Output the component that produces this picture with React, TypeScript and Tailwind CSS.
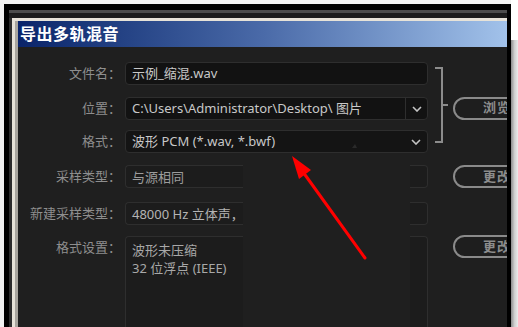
import React from "react";

const FONT = "font-['Noto_Sans','Noto_Sans_CJK_SC',sans-serif]";

function Chevron() {
  return (
    <svg width="10" height="6" viewBox="0 0 10 6" className="shrink-0">
      <path d="M1 1 L5 5 L9 1" fill="none" stroke="#c4c4c4" strokeWidth="1.6" />
    </svg>
  );
}

function Label({ text }: { text: string }) {
  return (
    <div className="w-[103px] shrink-0 text-right text-[13px] leading-[23px] text-[#8e8e8e] pr-0">
      {text}
    </div>
  );
}

function PillButton({ text }: { text: string }) {
  return (
    <div className="w-[88px] h-[23px] shrink-0 rounded-full border-2 border-[#8a8a8a] bg-[#1e1e1e] flex items-center justify-center text-[13px] text-[#8c8c8c] font-bold tracking-[1px]">
      {text}
    </div>
  );
}

function SplitBox({
  text,
  tall,
  color,
}: {
  text: React.ReactNode;
  tall?: boolean;
  color: string;
}) {
  return (
    <div className="flex ml-[4px]">
      <div
        className={
          tall
            ? "w-[118px] h-[110px] border-l border-t border-[#2e2e2e] rounded-tl-[4px] bg-[#1c1c1c] pl-[6px] pt-[4px]"
            : "w-[118px] h-[23px] border-l border-t border-b border-[#2e2e2e] rounded-l-[4px] bg-[#1c1c1c] pl-[6px] flex items-center"
        }
      >
        <div className={"text-[13px] leading-[18px] whitespace-nowrap " + color}>{text}</div>
      </div>
      <div className="w-[167px]" />
      <div
        className={
          tall
            ? "w-[18px] h-[110px] border-r border-t border-[#2e2e2e] rounded-tr-[4px] bg-[#1c1c1c]"
            : "w-[18px] h-[23px] border-r border-t border-b border-[#2e2e2e] rounded-r-[4px] bg-[#1c1c1c]"
        }
      />
    </div>
  );
}

export default function App() {
  return (
    <div className={"relative w-[518px] h-[327px] overflow-hidden bg-[#f2f2f2] flex " + FONT}>
      <div className="w-[4px] shrink-0" />
      {/* black window frame */}
      <div className="mt-[4px] w-[507px] shrink-0 bg-black flex flex-col">
        <div className="ml-[5px] mr-[4px] mt-[6px] flex-1 flex flex-col bg-[#2c2c2c] border-t-[3px] border-[#4c4c4c]">
          <div className="h-[5px] bg-[#1c1c1c]" />
          <div className="flex-1 ml-[3px] flex flex-col border-t-[3px] border-l-[3px] border-[#e6e2d8] overflow-hidden">
            <div className="flex-1 flex flex-col border-l-[3px] border-[#a8a59e] overflow-hidden">
              {/* title bar */}
              <div className="h-[26px] shrink-0 bg-gradient-to-r from-[#0a246a] via-[#4a6aa8] to-[#a2c2ea] flex items-center pl-[2px]">
                <span className="text-white font-bold text-[16px] tracking-[0.5px] leading-none">导出多轨混音</span>
              </div>
              {/* body */}
              <div className="flex-1 bg-[#1f1f1f] flex flex-col pt-[15px]">
                {/* top group */}
                <div className="flex">
                  <div className="w-[410px] shrink-0 flex flex-col">
                    <div className="flex h-[23px]">
                      <Label text="文件名：" />
                      <div className="ml-[4px] w-[303px] h-[23px] rounded-[4px] border border-[#2e2e2e] bg-[#121212] flex items-center pl-[6px] text-[13px] text-[#c8c8c8]">
                        示例_缩混.wav
                      </div>
                    </div>
                    <div className="flex h-[23px] mt-[12px]">
                      <Label text="位置：" />
                      <div className="ml-[4px] w-[303px] h-[23px] rounded-[4px] border border-[#2e2e2e] bg-[#121212] flex items-center text-[13px] text-[#c8c8c8]">
                        <div className="flex-1 pl-[6px] whitespace-nowrap overflow-hidden">
                          C:\Users\Administrator\Desktop\ 图片
                        </div>
                        <div className="w-[22px] h-full border-l border-[#2e2e2e] flex items-center justify-center">
                          <Chevron />
                        </div>
                      </div>
                    </div>
                    <div className="flex h-[23px] mt-[10px]">
                      <Label text="格式：" />
                      <div className="ml-[4px] w-[303px] h-[23px] rounded-[4px] border border-[#2e2e2e] bg-[#141414] flex items-center text-[13px] text-[#c8c8c8]">
                        <div className="flex-1 pl-[6px] whitespace-nowrap">波形 PCM (*.wav, *.bwf)</div>
                        <div className="w-[22px] h-full flex items-center justify-center">
                          <Chevron />
                        </div>
                      </div>
                    </div>
                  </div>
                  <svg width="14" height="76" className="ml-[7px] mt-[5px] shrink-0">
                    <path d="M0 1 H7 V75 H0 M7 38 H13" fill="none" stroke="#8c8c8c" strokeWidth="2" />
                  </svg>
                  <div className="ml-[4px] self-center mt-[1px]">
                    <PillButton text="浏览" />
                  </div>
                </div>
                {/* 采样类型 */}
                <div className="flex h-[23px] mt-[12px] items-start">
                  <Label text="采样类型：" />
                  <SplitBox text="与源相同" color="text-[#9c9c9c]" />
                  <div className="w-[25px] shrink-0" />
                  <PillButton text="更改" />
                </div>
                {/* 新建采样类型 */}
                <div className="flex h-[23px] mt-[14px]">
                  <Label text="新建采样类型：" />
                  <SplitBox text="48000 Hz 立体声，" color="text-[#b4b4b4]" />
                </div>
                {/* 格式设置 */}
                <div className="flex mt-[11px] items-start">
                  <Label text="格式设置：" />
                  <SplitBox
                    tall
                    text={
                      <>
                        <div>波形未压缩</div>
                        <div>32 位浮点 (IEEE)</div>
                      </>
                    }
                    color="text-[#a8a8a8]"
                  />
                  <div className="w-[25px] shrink-0" />
                  <div className="-mt-[1px]">
                    <PillButton text="更改" />
                  </div>
                </div>
              </div>
            </div>
          </div>
        </div>
      </div>
      {/* right edge strip */}
      <div className="flex-1 flex flex-col">
        <div className="h-[40px] bg-white" />
        <div className="flex-1 bg-gradient-to-r from-[#8c8c8c] via-[#cfcfcf] to-[#ececec]" />
      </div>
      {/* red annotation arrow */}
      <svg className="absolute left-0 top-0 pointer-events-none" width="518" height="327">
        <line x1="303" y1="172" x2="365" y2="258" stroke="#ff0000" strokeWidth="3" strokeLinecap="round" />
        <polygon points="292,156 311,170 299,179" fill="#ff0000" />
        <polygon points="352,148 357,148 355,144" fill="#2a2a2a" />
      </svg>
    </div>
  );
}
